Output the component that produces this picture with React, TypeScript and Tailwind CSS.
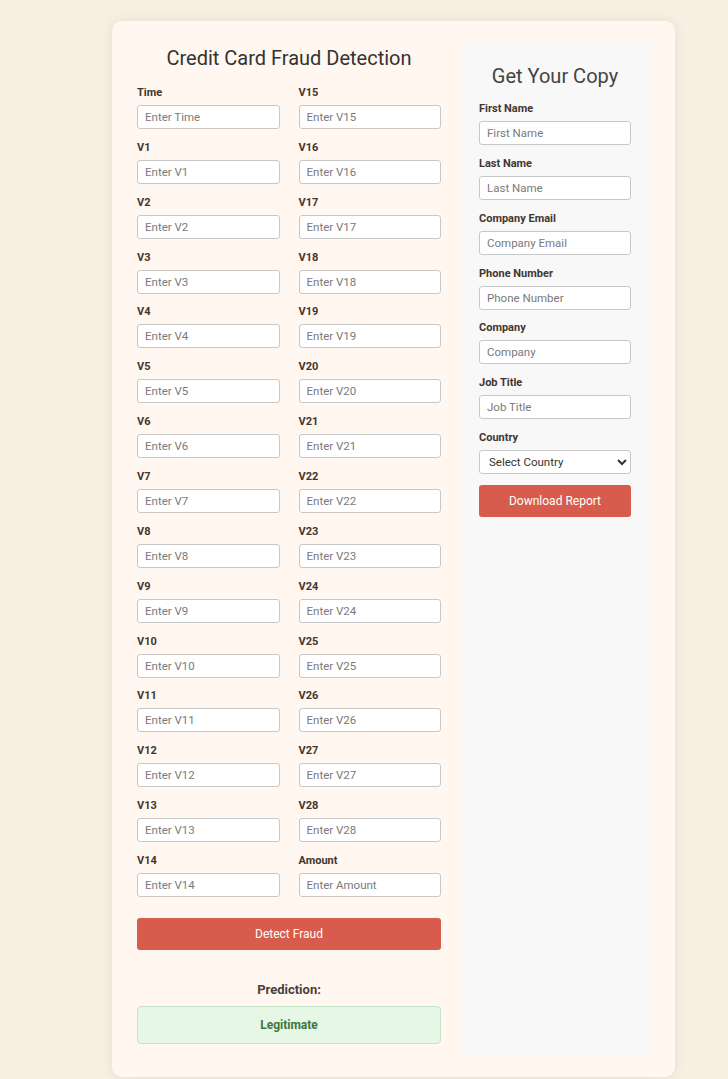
import React from "react";

const leftFields = [
  "Time", "V15", "V1", "V16", "V2", "V17", "V3", "V18", "V4", "V19", "V5", "V20",
  "V6", "V21", "V7", "V22", "V8", "V23", "V9", "V24", "V10", "V25", "V11", "V26",
  "V12", "V27", "V13", "V28", "V14", "Amount",
];

const copyFields = ["First Name", "Last Name", "Company Email", "Phone Number", "Company", "Job Title"];

const Field = ({ label, placeholder }: { label: string; placeholder: string }) => (
  <div className="mb-[10.86px] flex flex-col">
    <label className="h-[15px] text-[11px] font-bold leading-[15px] text-[#43362f]">{label}</label>
    <input
      type="text"
      placeholder={placeholder}
      className="mt-[5px] h-[24px] w-full rounded-[3px] border border-[#c8c8c8] bg-white px-[7px] text-[11.5px] text-[#333] placeholder:text-[#7a7a7a] outline-none"
    />
  </div>
);

export default function App() {
  return (
    <div className="min-h-screen bg-[#f7efe2] pt-[21px] font-['Roboto',sans-serif]">
      <div className="ml-[112px] flex w-[563px] gap-[20px] rounded-[10px] bg-[#fff7f0] pl-[25px] pr-[26px] py-[22px] shadow-[0_0_12px_rgba(0,0,0,0.08)]">
        <div className="flex w-[304px] flex-col">
          <h1 className="mb-[12px] h-[30px] text-center text-[20px] leading-[30px] text-[#333]">
            Credit Card Fraud Detection
          </h1>
          <div className="grid grid-cols-2 gap-x-[19px]">
            {leftFields.map((f) => (
              <Field key={f} label={f} placeholder={`Enter ${f}`} />
            ))}
          </div>
          <button className="mt-[10px] h-[32px] w-full rounded-[3px] bg-[#d75c4d] text-[12px] text-white">
            Detect Fraud
          </button>
          <div className="mt-[30px] flex flex-col">
            <h3 className="h-[20px] text-center text-[13px] font-bold leading-[20px] text-[#4a3f3a]">Prediction:</h3>
            <div className="mt-[6px] mb-[11px] flex h-[38px] items-center justify-center rounded-[4px] border border-[#c5e3c5] bg-[#e6f7e6] text-[12px] font-bold text-[#3c763d]">
              Legitimate
            </div>
          </div>
        </div>
        <div className="w-[188px] bg-[#f8f8f8] px-[18px] pt-[18px]">
          <h2 className="mb-[10px] h-[30px] text-center text-[20px] leading-[30px] text-[#444]">Get Your Copy</h2>
          {copyFields.map((f) => (
            <Field key={f} label={f} placeholder={f} />
          ))}
          <div className="mb-[10.86px] flex flex-col">
            <label className="h-[15px] text-[11px] font-bold leading-[15px] text-[#43362f]">Country</label>
            <select className="mt-[5px] h-[24px] w-full rounded-[3px] border border-[#c8c8c8] bg-white px-[5px] text-[11.5px] text-[#333] outline-none">
              <option>Select Country</option>
            </select>
          </div>
          <button className="h-[32px] w-full rounded-[3px] bg-[#d75c4d] text-[12px] text-white">Download Report</button>
        </div>
      </div>
    </div>
  );
}
